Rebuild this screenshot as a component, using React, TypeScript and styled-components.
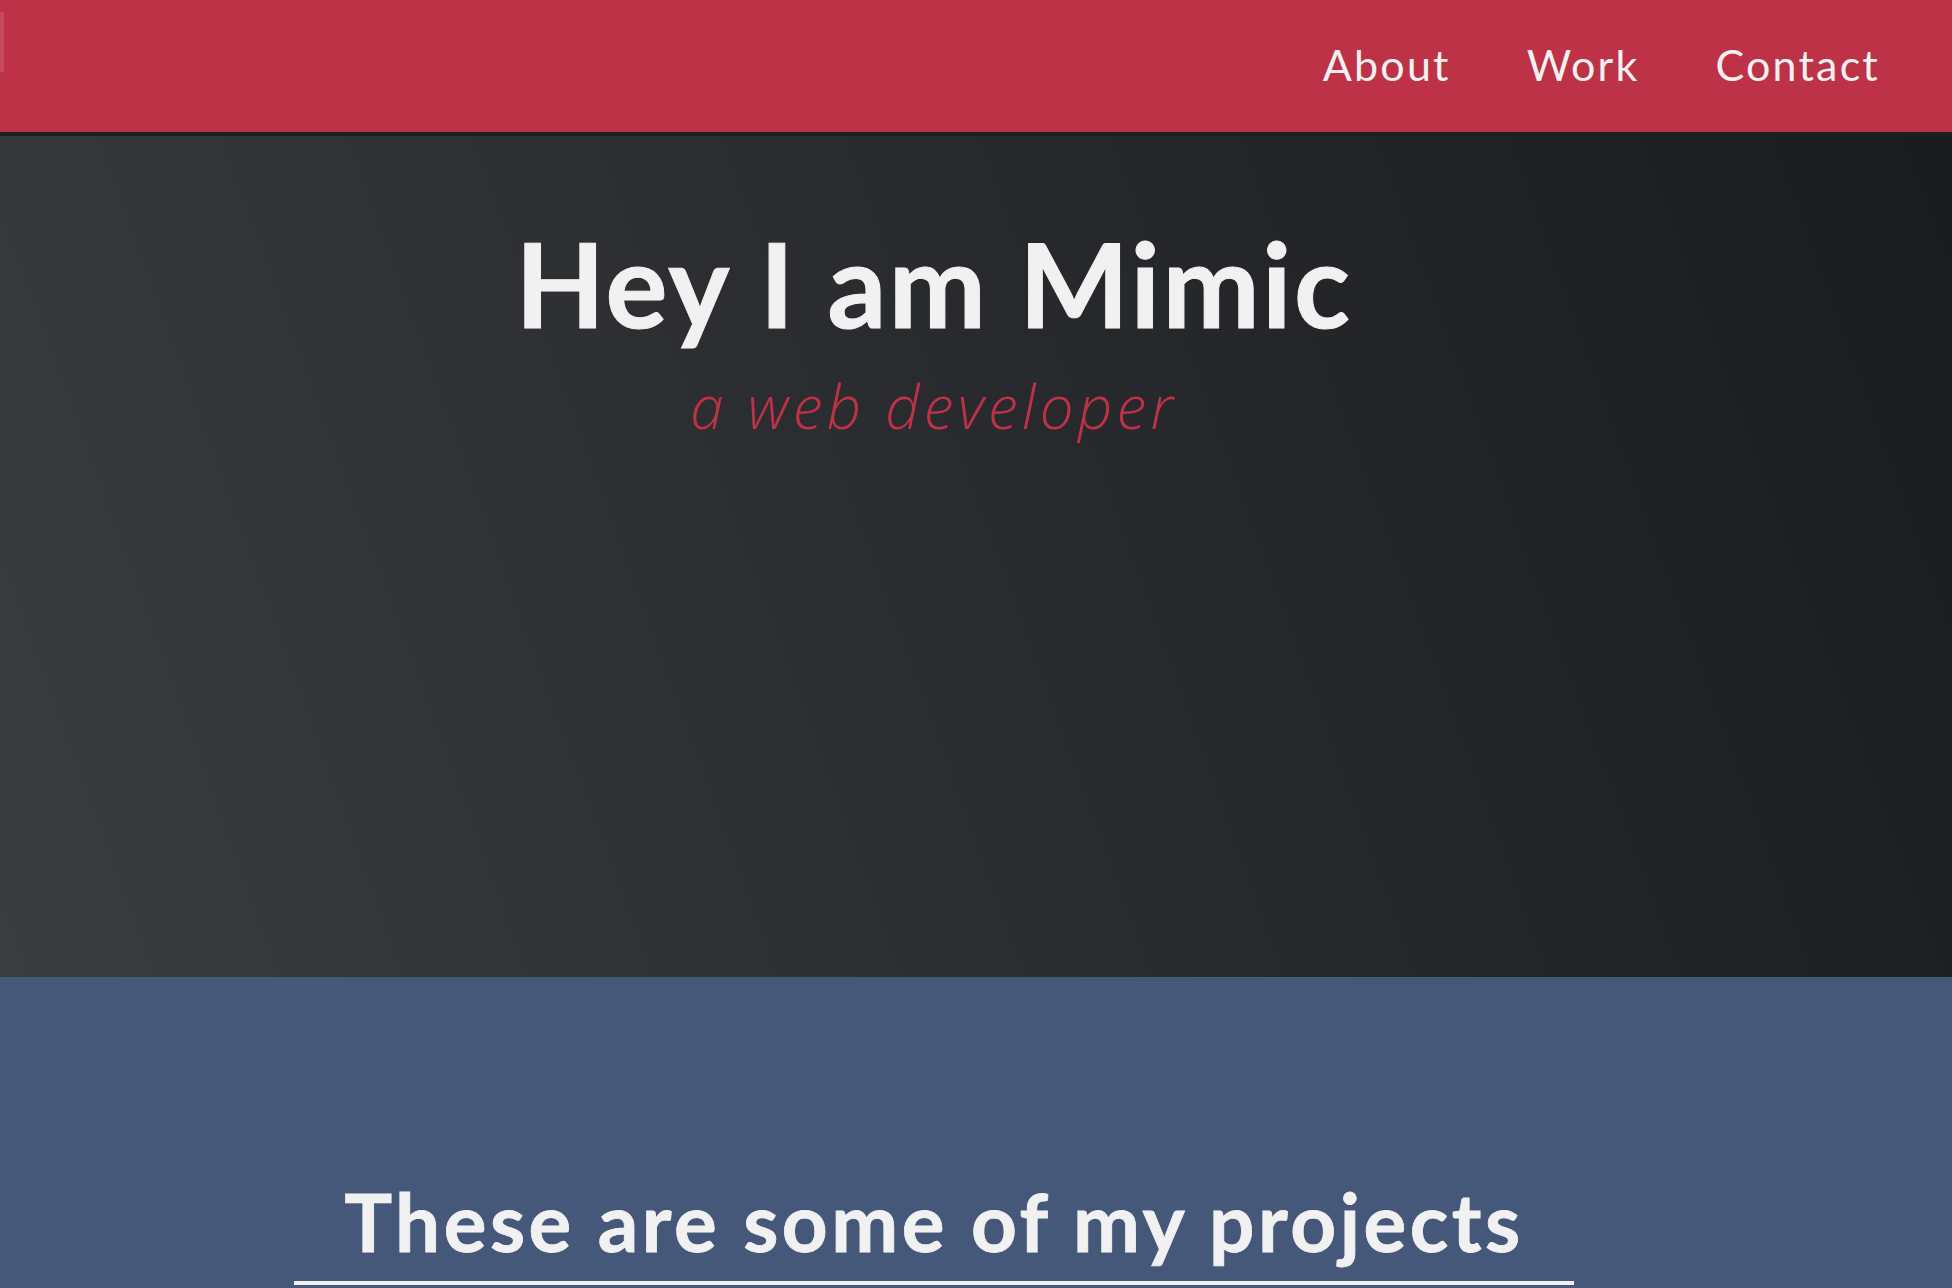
import React from "react";
import styled, { createGlobalStyle } from "styled-components";

const GlobalStyle = createGlobalStyle`
  html, body {
    margin: 0;
    padding: 0;
    background: #45587a;
    overflow: hidden;
  }
  * { box-sizing: border-box; }
`;

const Nav = styled.header`
  height: 136px;
  background: #be3248;
  border-bottom: 4px solid #1e1f21;
  display: flex;
  justify-content: space-between;
  align-items: center;
  padding: 0 72px 0 0;
`;

const LogoMark = styled.div`
  align-self: flex-start;
  margin-top: 12px;
  width: 4px;
  height: 60px;
  background: #c5495c;
`;

const NavLinks = styled.nav`
  display: flex;
  gap: 76px;
  align-items: center;
  margin-bottom: 4px;
`;

const NavLink = styled.a`
  font-family: "Lato", "Noto Sans", sans-serif;
  font-weight: 400;
  font-size: 43px;
  letter-spacing: 2.2px;
  line-height: 1;
  color: #f1f1f1;
  text-decoration: none;
`;

const Hero = styled.section`
  height: 841px;
  background: linear-gradient(70deg, #3a3c3f 0%, #2a2b2e 50%, #1a1b1d 100%);
  display: flex;
  flex-direction: column;
  align-items: center;
  padding: 90px 84px 0 0;
`;

const Title = styled.h1`
  margin: 0;
  font-family: "Lato", "Noto Sans", sans-serif;
  font-weight: 700;
  font-size: 116px;
  letter-spacing: 2.5px;
  line-height: 1;
  color: #f1f1f1;
  -webkit-text-stroke: 1px #f1f1f1;
`;

const Subtitle = styled.p`
  margin: 34px 0 0;
  font-family: "Open Sans", "Lato", sans-serif;
  font-weight: 300;
  font-style: italic;
  font-size: 60px;
  letter-spacing: 4.3px;
  line-height: 1;
  color: #be3248;
`;

const Projects = styled.section`
  background: #45587a;
  display: flex;
  flex-direction: column;
  align-items: center;
  padding: 204px 84px 0 0;
`;

const SectionTitle = styled.h2`
  margin: 0;
  width: 1280px;
  padding-bottom: 20px;
  border-bottom: 4px solid #f1f1f1;
  text-align: center;
  font-family: "Lato", "Noto Sans", sans-serif;
  font-weight: 700;
  font-size: 80px;
  letter-spacing: 3.5px;
  line-height: 1;
  color: #f1f1f1;
  -webkit-text-stroke: 0.8px #f1f1f1;
`;

export default function App() {
  return (
    <>
      <GlobalStyle />
      <Nav>
        <LogoMark />
        <NavLinks>
          <NavLink href="#about">About</NavLink>
          <NavLink href="#work">Work</NavLink>
          <NavLink href="#contact">Contact</NavLink>
        </NavLinks>
      </Nav>
      <Hero>
        <Title>Hey I am Mimic</Title>
        <Subtitle>a web developer</Subtitle>
      </Hero>
      <Projects>
        <SectionTitle>These are some of my projects</SectionTitle>
      </Projects>
    </>
  );
}
